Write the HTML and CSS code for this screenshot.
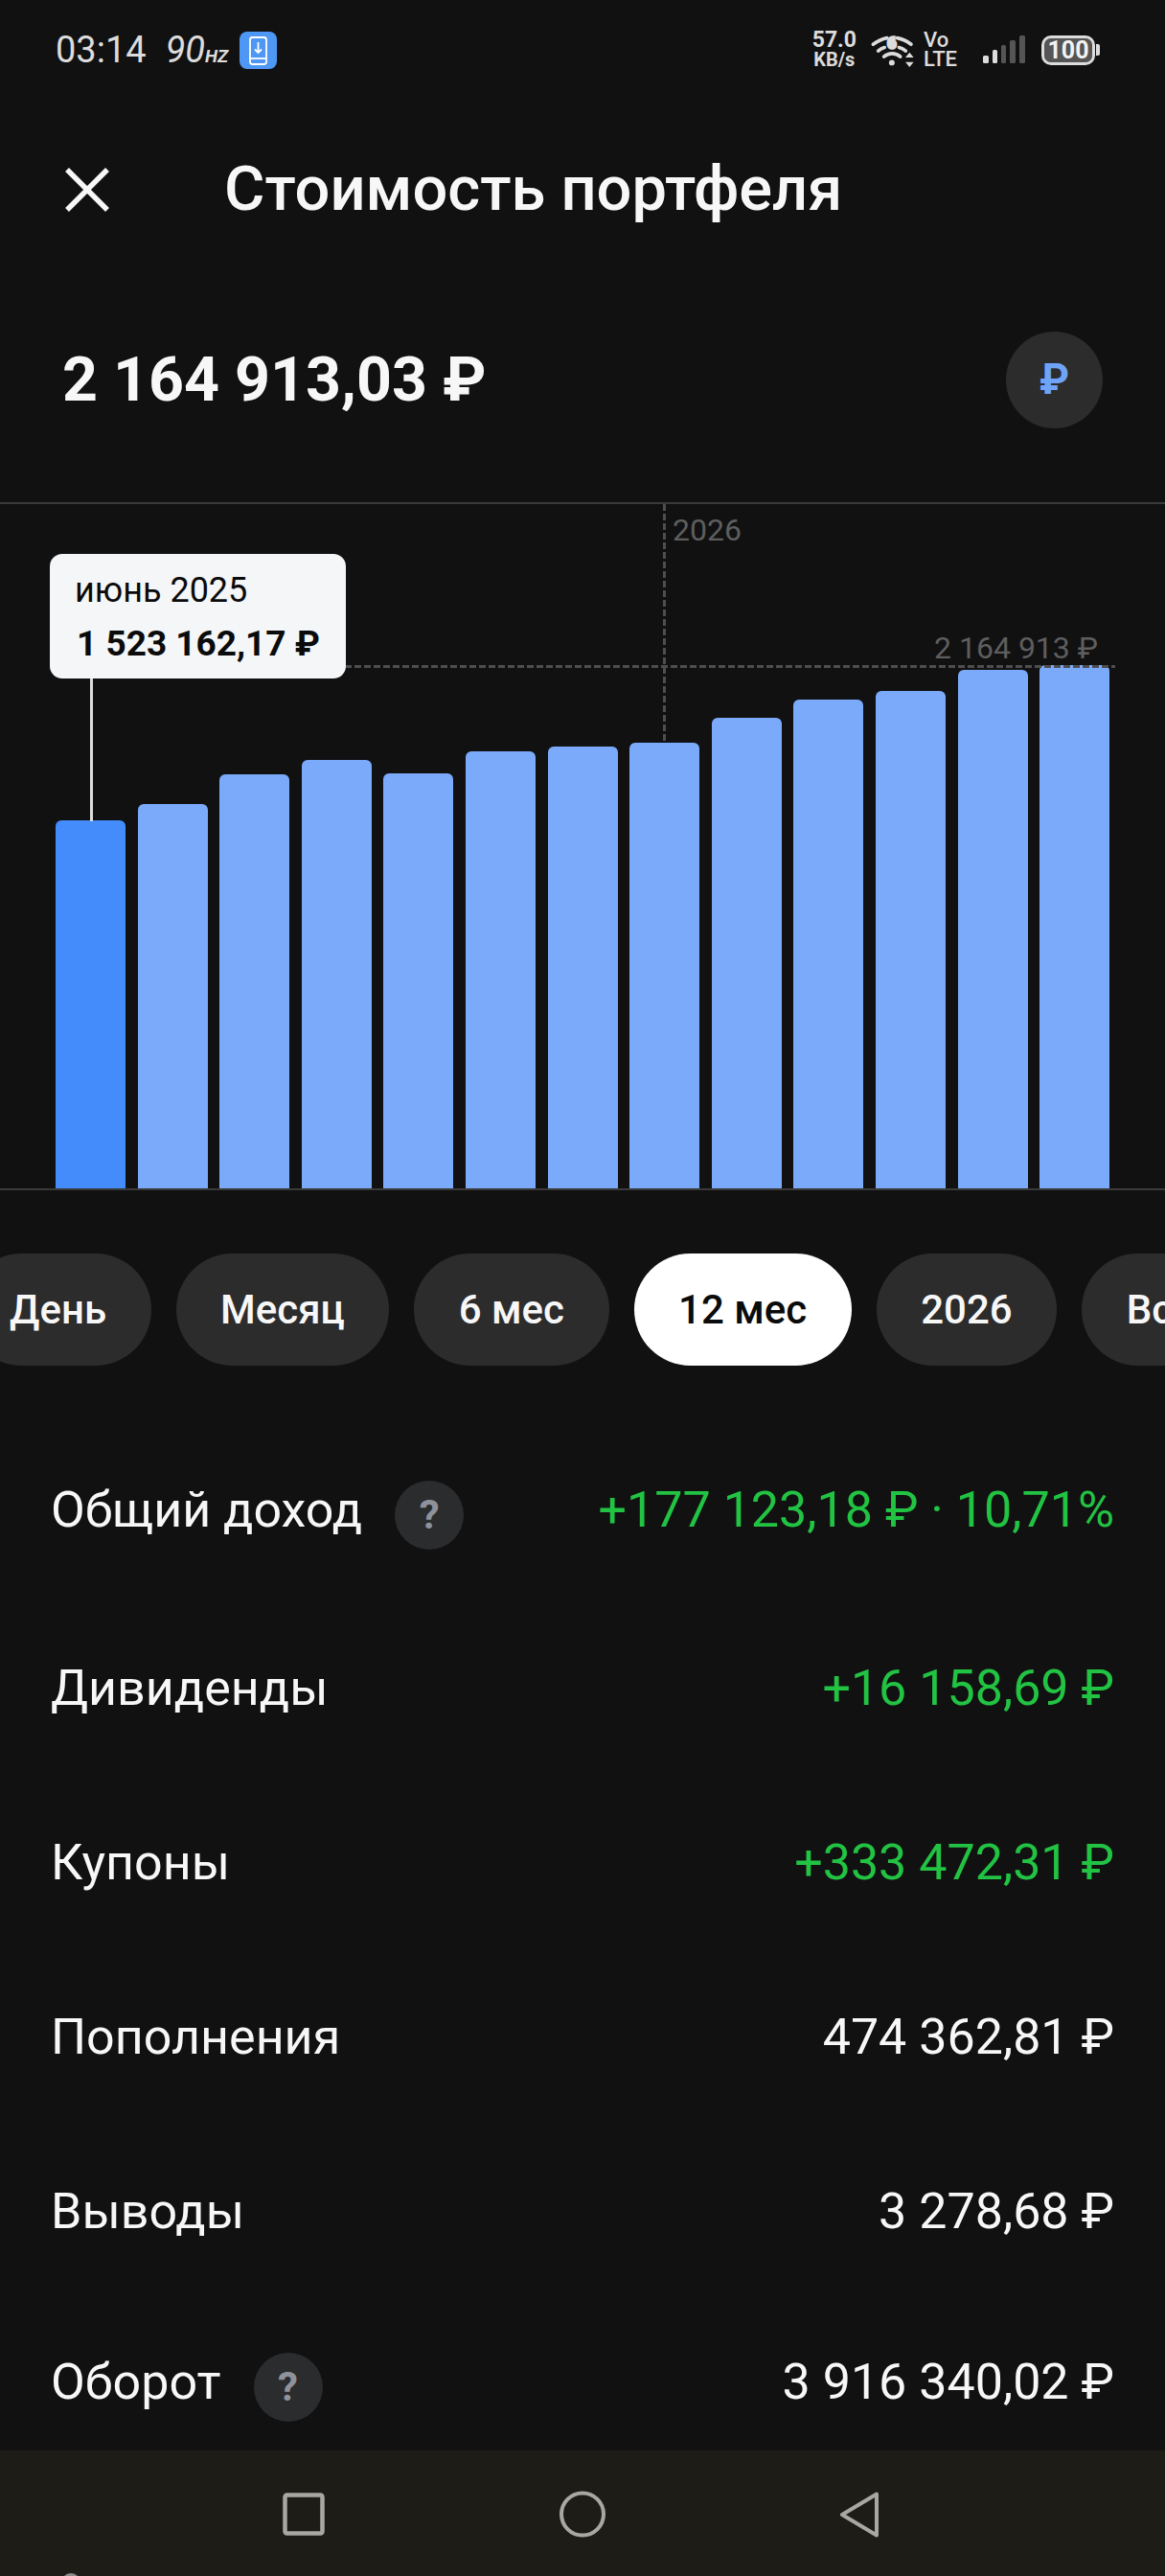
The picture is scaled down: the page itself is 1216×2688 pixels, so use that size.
FILE: index.html
```html
<!DOCTYPE html>
<html lang="ru">
<head>
  <meta charset="UTF-8">
  <meta name="viewport" content="width=device-width, initial-scale=1.0">
  <title>Стоимость портфеля</title>
  <link rel="stylesheet" href="styles.css">
</head>

<body>
  <main class="screen">
    <!-- Status bar -->
    <div class="status">
      <div class="status-left">
        <span class="clock">03:14</span>
        <span class="rate">90<small>HZ</small></span>
        <span class="app-badge">
          <svg width="39" height="39" viewBox="0 0 39 39" fill="none" stroke="#fff" stroke-width="1.8">
            <rect x="11" y="6" width="17" height="28" rx="2.5"/>
            <path d="M11 28h17"/>
            <path d="M19.5 11v11M16 18.5l3.5 3.5 3.5-3.5"/>
          </svg>
        </span>
      </div>
      <div class="status-right">
        <span class="speed"><b>57.0</b><b>KB/s</b></span>
        <svg class="wifi" width="47" height="38" viewBox="385 100 140 115" fill="none" stroke="#dcdcdc" stroke-width="11" stroke-linecap="round">
          <path d="M394 140c14-10 28-17 44-20"/>
          <path d="M470 120c16 3 31 10 44 20"/>
          <path d="M410 161c6-5 13-9 20-11"/>
          <path d="M476 150c8 2 15 6 21 11"/>
          <path d="M428 179c16-13 37-13 52 0"/>
          <circle cx="453" cy="198" r="9" fill="#dcdcdc" stroke="none"/>
          <path d="M509 166l13 16h-26zM509 212l13-16h-26z" fill="#dcdcdc" stroke="none"/>
          <text x="453" y="152" text-anchor="middle" class="wifi-six">6</text>
        </svg>
        <span class="volte"><b>Vo</b><b>LTE</b></span>
        <svg class="signal" width="44" height="30" viewBox="0 0 44 30">
          <rect x="0" y="21" width="6" height="8" rx="1.5" fill="#dcdcdc"/>
          <rect x="10" y="15" width="5" height="14" rx="1.5" fill="#dcdcdc"/>
          <rect x="19" y="10" width="5" height="19" rx="1.5" fill="#555"/>
          <rect x="28" y="5" width="6" height="24" rx="1.5" fill="#555"/>
          <rect x="38" y="0" width="6" height="29" rx="1.5" fill="#555"/>
        </svg>
        <span class="battery"><span class="battery-body">100</span><span class="battery-tip"></span></span>
      </div>
    </div>

    <!-- Header -->
    <header class="header">
      <svg class="close" width="46" height="46" viewBox="0 0 46 46" stroke="#f7f7f7" stroke-width="5.5">
        <path d="M2 2l42 42M44 2L2 44"/>
      </svg>
      <h1 class="title">Стоимость портфеля</h1>
    </header>

    <div class="amount">
      <span class="amount-value">2 164 913,03 ₽</span>
      <span class="currency">₽</span>
    </div>

    <!-- Chart -->
    <section class="chart">
      <div class="bars">
        <div class="bar bar-active" style="height: 384px"></div>
        <div class="bar" style="height: 401px"></div>
        <div class="bar" style="height: 432px"></div>
        <div class="bar" style="height: 447px"></div>
        <div class="bar" style="height: 433px"></div>
        <div class="bar" style="height: 456px"></div>
        <div class="bar" style="height: 461px"></div>
        <div class="bar" style="height: 465px"></div>
        <div class="bar" style="height: 491px"></div>
        <div class="bar" style="height: 510px"></div>
        <div class="bar" style="height: 519px"></div>
        <div class="bar" style="height: 541px"></div>
        <div class="bar" style="height: 546px"></div>
      </div>
      <div class="year-line"></div>
      <span class="year-label">2026</span>
      <div class="max-line"></div>
      <span class="max-label">2 164 913 ₽</span>
      <div class="pointer"></div>
      <div class="tooltip">
        <span class="tooltip-date">июнь 2025</span>
        <strong class="tooltip-value">1 523 162,17 ₽</strong>
      </div>
    </section>

    <!-- Period pills -->
    <nav class="periods">
      <span class="pill">День</span>
      <span class="pill">Месяц</span>
      <span class="pill">6 мес</span>
      <span class="pill pill-active">12 мес</span>
      <span class="pill">2026</span>
      <span class="pill">Всё время</span>
    </nav>

    <!-- Totals -->
    <section class="rows">
      <div class="row row-help">
        <div class="label"><span class="label-text">Общий доход</span><span class="help">?</span></div>
        <span class="value value-up">+177 123,18 ₽ · 10,71%</span>
      </div>
      <div class="row">
        <div class="label"><span class="label-text">Дивиденды</span></div>
        <span class="value value-up">+16 158,69 ₽</span>
      </div>
      <div class="row">
        <div class="label"><span class="label-text">Купоны</span></div>
        <span class="value value-up">+333 472,31 ₽</span>
      </div>
      <div class="row">
        <div class="label"><span class="label-text">Пополнения</span></div>
        <span class="value">474 362,81 ₽</span>
      </div>
      <div class="row">
        <div class="label"><span class="label-text">Выводы</span></div>
        <span class="value">3 278,68 ₽</span>
      </div>
      <div class="row row-help">
        <div class="label"><span class="label-text">Оборот</span><span class="help">?</span></div>
        <span class="value">3 916 340,02 ₽</span>
      </div>
    </section>
  </main>

  <!-- Android navigation bar -->
  <footer class="navbar">
    <svg width="44" height="45" viewBox="0 0 44 45" fill="none" stroke="#a9a7a3" stroke-width="4.5">
      <rect x="2.5" y="2.5" width="39" height="40" rx="2"/>
    </svg>
    <svg width="48" height="49" viewBox="0 0 48 49" fill="none" stroke="#a9a7a3" stroke-width="4">
      <circle cx="24" cy="24.5" r="22"/>
    </svg>
    <svg width="42" height="48" viewBox="0 0 42 48" fill="none" stroke="#a9a7a3" stroke-width="4" stroke-linejoin="round">
      <path d="M39 2.5v43L3 24z"/>
    </svg>
    <span class="nav-dot"></span>
  </footer>
</body>
</html>
```

FILE: styles.css
```css
/* Page base */
html, body {
  margin: 0;
  padding: 0;
}

body {
  position: relative;
  width: 1216px;
  height: 2688px;
  overflow: hidden;
  background-color: #111112;
  color: #f7f7f7;
  font-family: Roboto, "Noto Sans", sans-serif;
}

.screen {
  height: 2557px;
  overflow: hidden;
}

/* Status bar */
.status {
  display: flex;
  justify-content: space-between;
  align-items: center;
  height: 104px;
  padding: 0 68px 0 58px;
  color: #dcdcdc;
}

.status-left,
.status-right {
  display: flex;
  align-items: center;
}

.clock {
  font-size: 38px;
}

.rate {
  margin-left: 20px;
  font-size: 38px;
  font-style: italic;
}

.rate small {
  font-size: 19px;
  font-weight: 700;
}

.app-badge {
  display: block;
  width: 39px;
  height: 39px;
  margin-left: 12px;
  border-radius: 8px;
  background-color: #4f97f4;
}

.speed,
.volte {
  display: flex;
  flex-direction: column;
  font-size: 20px;
  line-height: 20px;
}

.speed {
  align-items: center;
}

.speed b:first-child {
  font-size: 23px;
}

.wifi {
  margin-left: 14px;
}

.wifi-six {
  font-family: Roboto, sans-serif;
  font-size: 46px;
  font-weight: 500;
  fill: #dcdcdc;
}

.volte {
  margin-left: 9px;
  font-size: 22px;
  font-weight: 500;
}

.volte b {
  font-weight: 500;
}

.signal {
  margin-left: 27px;
}

.battery {
  display: flex;
  align-items: center;
  margin-left: 17px;
}

.battery-body {
  box-sizing: border-box;
  width: 56px;
  height: 31px;
  border: 3px solid #dcdcdc;
  border-radius: 10px;
  background-color: #555;
  background-clip: padding-box;
  color: #f2f2f2;
  font-size: 25px;
  font-weight: 700;
  line-height: 25px;
  text-align: center;
}

.battery-tip {
  width: 4px;
  height: 12px;
  margin-left: 1px;
  border-radius: 0 2px 2px 0;
  background-color: #dcdcdc;
}

/* Header */
.header {
  display: flex;
  align-items: center;
  height: 188px;
  padding-left: 68px;
}

.title {
  margin: 0 0 2px 120px;
  font-size: 65px;
  font-weight: 500;
  line-height: 76px;
}

.amount {
  display: flex;
  justify-content: space-between;
  align-items: flex-start;
  height: 178px;
  padding: 54px 65px 0 65px;
}

.amount-value {
  font-size: 64.5px;
  font-weight: 700;
  line-height: 101px;
}

.currency {
  width: 101px;
  height: 101px;
  border-radius: 50%;
  background-color: #2c2c2d;
  color: #6ea4f8;
  font-size: 44px;
  font-weight: 700;
  line-height: 101px;
  text-align: center;
}

/* Chart */
.chart {
  position: relative;
  box-sizing: border-box;
  height: 718px;
  border-top: 2px solid #3a3a3a;
  border-bottom: 2px solid #3a3a3a;
}

.bars {
  display: flex;
  align-items: flex-end;
  gap: 12.6px;
  height: 100%;
  padding-left: 58px;
}

.bar {
  flex: none;
  width: 73px;
  border-radius: 6px 6px 0 0;
  background-color: #7baafa;
}

.bar-active {
  background-color: #448cfb;
}

.year-line {
  position: absolute;
  left: 692px;
  top: 0;
  width: 3px;
  height: 250px;
  background: repeating-linear-gradient(to bottom, #4e4e4e 0 7px, transparent 7px 10px);
}

.year-label {
  position: absolute;
  left: 702px;
  top: 8px;
  color: #5e5e5e;
  font-size: 32px;
}

.max-line {
  position: absolute;
  left: 360px;
  top: 168px;
  width: 804px;
  height: 3px;
  background: repeating-linear-gradient(to right, #4e4e4e 0 7px, transparent 7px 10px);
}

.max-label {
  position: absolute;
  right: 70px;
  top: 131px;
  color: #5e5e5e;
  font-size: 32px;
}

.pointer {
  position: absolute;
  left: 94px;
  top: 180px;
  width: 3px;
  height: 151px;
  background-color: #dddddd;
}

.tooltip {
  position: absolute;
  left: 52px;
  top: 52px;
  display: flex;
  flex-direction: column;
  box-sizing: border-box;
  width: 309px;
  height: 130px;
  padding: 14px 0 0 26px;
  border-radius: 13px;
  background-color: #f4f6f8;
  color: #0b0b0b;
}

.tooltip-date {
  font-size: 36px;
  line-height: 48px;
}

.tooltip-value {
  margin-top: 9px;
  margin-left: 2px;
  font-size: 37px;
  line-height: 46px;
}

/* Period pills */
.periods {
  display: flex;
  gap: 26px;
  height: 117px;
  margin: 66px 0 0 -36.5px;
}

.pill {
  flex: none;
  padding: 0 46.5px;
  border-radius: 59px;
  background-color: #2c2c2d;
  font-size: 42px;
  font-weight: 500;
  line-height: 117px;
}

.pill-active {
  background-color: #ffffff;
  color: #0b0b0b;
}

/* Totals */
.rows {
  margin-top: 65px;
}

.row {
  display: flex;
  justify-content: space-between;
  align-items: center;
  height: 182px;
  padding: 0 53px;
  font-size: 52px;
}

.label {
  display: flex;
  align-items: center;
  gap: 34px;
}

.label-text,
.value {
  margin-bottom: 3px;
}

.row-help .label-text,
.row-help .value {
  margin-bottom: 11px;
}

.value-up {
  color: #22c343;
}

.help {
  width: 72px;
  height: 72px;
  border-radius: 50%;
  background-color: #2b2c2d;
  color: #8f929b;
  font-size: 42px;
  font-weight: 700;
  line-height: 72px;
  text-align: center;
}

/* Navigation bar */
.navbar {
  position: relative;
  display: flex;
  align-items: center;
  height: 131px;
  padding: 2px 298px 0 295px;
  box-sizing: border-box;
  justify-content: space-between;
  background-color: #1e1c17;
}

.nav-dot {
  position: absolute;
  left: 64px;
  top: 128px;
  width: 20px;
  height: 20px;
  border-radius: 50%;
  background-color: #8a8a8a;
}
```
